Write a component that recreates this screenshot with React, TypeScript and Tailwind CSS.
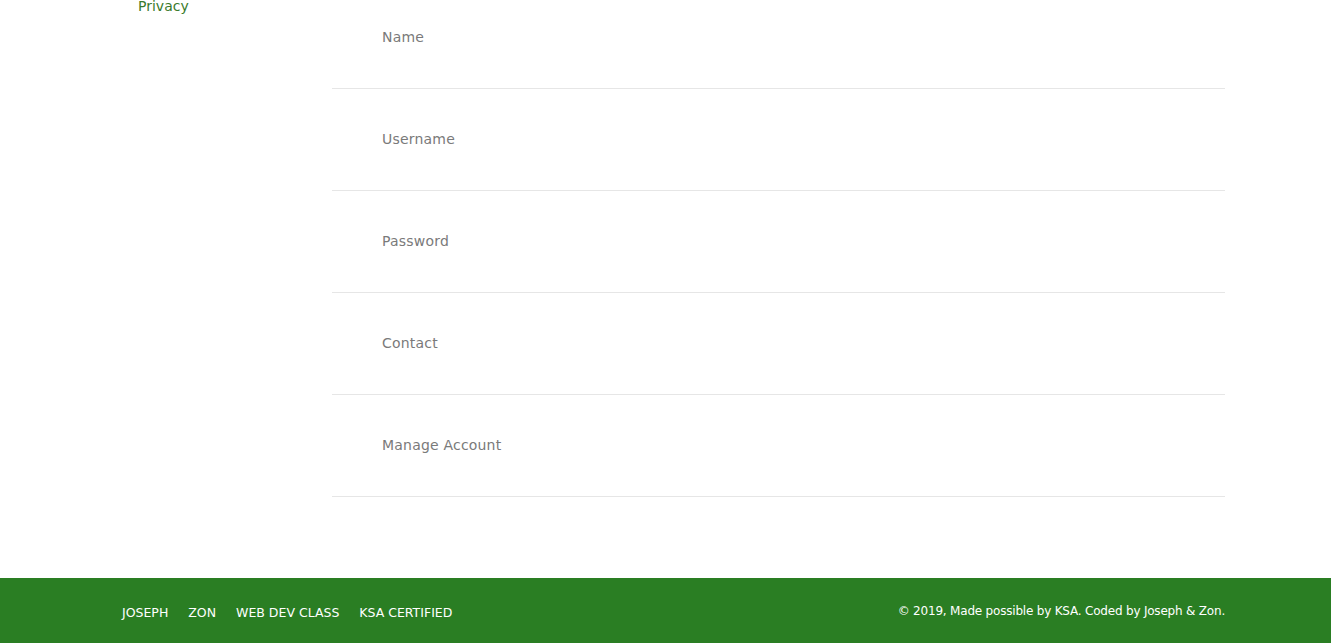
const fields = ['Name', 'Username', 'Password', 'Contact', 'Manage Account']

const footerLinks = ['JOSEPH', 'ZON', 'WEB DEV CLASS', 'KSA CERTIFIED']

export default function App() {
  return (
    <div className="min-h-screen bg-white font-['DejaVu_Sans',sans-serif] overflow-hidden">
      {/* settings body, scrolled a little */}
      <div className="-mt-[13px] ml-[122px] w-[1103px] flex">
        <aside className="w-[210px] shrink-0 pl-4 pt-[7px]">
          <a href="#" className="text-[14px] leading-5 text-[#3a7a2c]">
            Privacy
          </a>
        </aside>
        <div className="flex-1">
          {fields.map((field) => (
            <div
              key={field}
              className="h-[102px] flex items-center pl-[50px] border-b border-[#e6e6e6]"
            >
              <span className="text-[14px] text-[#7a7a7a] tracking-[0.2px]">{field}</span>
            </div>
          ))}
        </div>
      </div>

      <footer className="mt-[81px] h-[65px] bg-[#2a7e23] flex items-center justify-between pl-[122px] pr-[106px]">
        <nav className="flex items-center gap-5 pt-[5px]">
          {footerLinks.map((link) => (
            <a key={link} href="#" className="text-[12.5px] text-white">
              {link}
            </a>
          ))}
        </nav>
        <p className="text-[12px] text-white tracking-[-0.2px] pt-[1px]">
          © 2019, Made possible by KSA. Coded by Joseph &amp; Zon.
        </p>
      </footer>
    </div>
  )
}
